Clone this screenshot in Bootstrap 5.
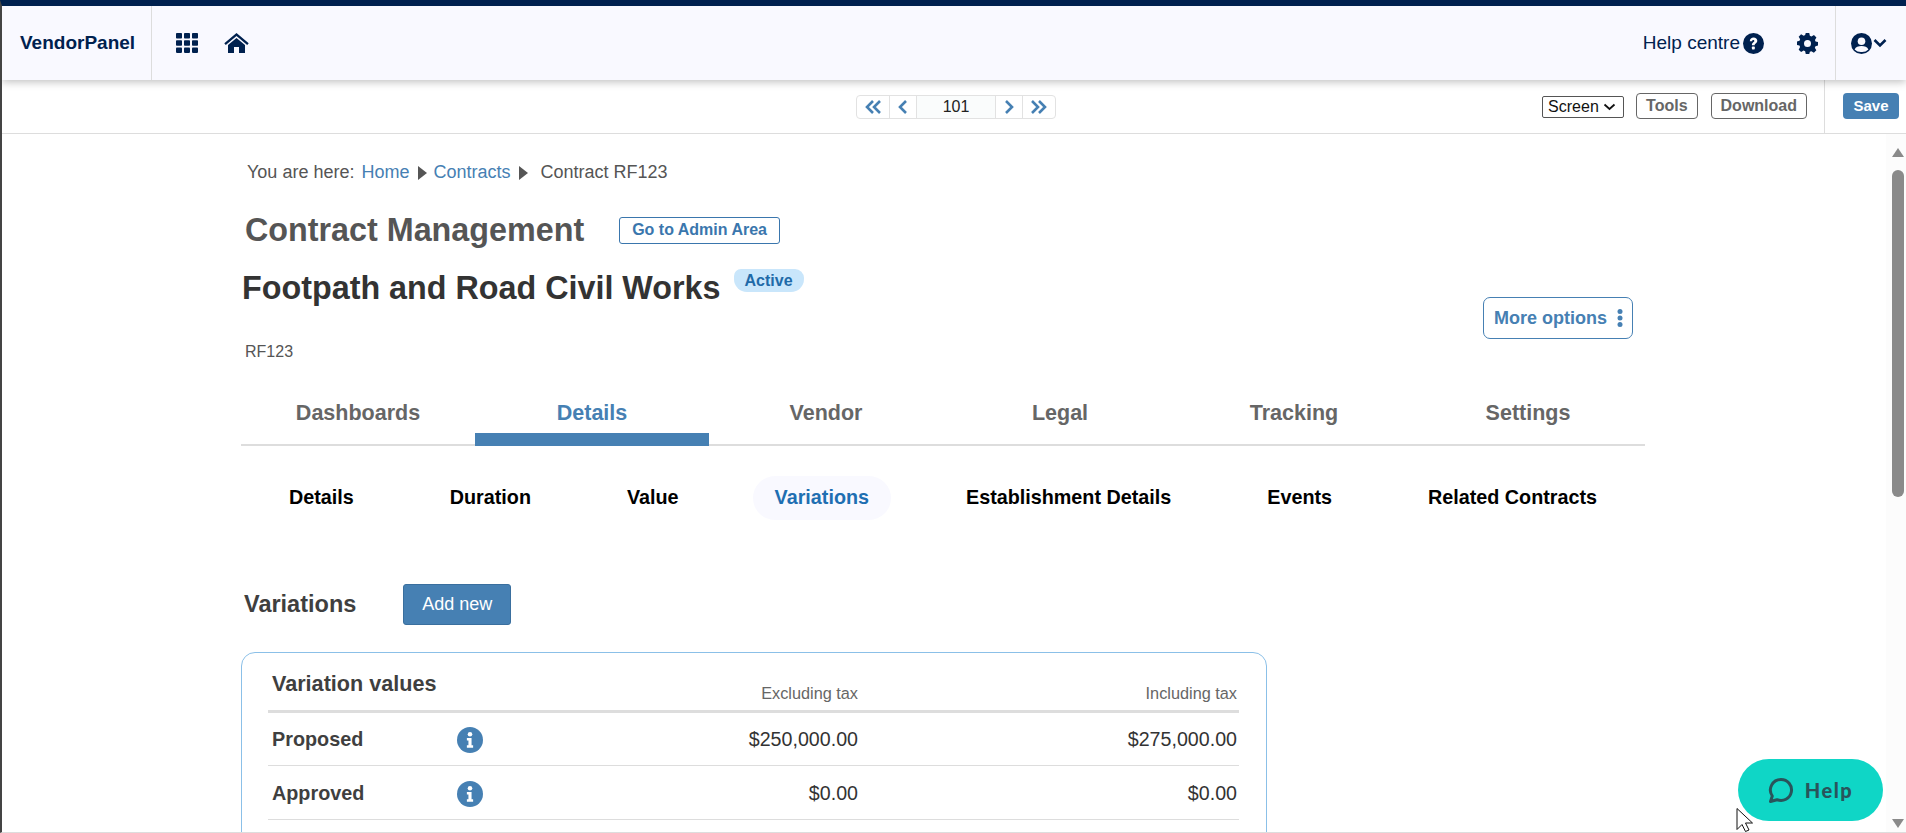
<!DOCTYPE html>
<html lang="en"><head><meta charset="utf-8"><title>VendorPanel</title>
<link href="https://cdn.jsdelivr.net/npm/bootstrap@5.3.0/dist/css/bootstrap.min.css" rel="stylesheet">
<style>
html,body{height:100%;overflow:hidden}
body{font-family:"Liberation Sans",Arial,sans-serif;color:#333;background:#fff;border-left:2px solid #444;border-bottom:1px solid #ddd;border-top:6px solid #00214f;display:flex;flex-direction:column}
a{text-decoration:none}
.topbar{height:74px;background:#f9f9ff;box-shadow:0 2px 8px rgba(0,0,0,.25);color:#00214f;position:relative;z-index:2;flex:none}
.brandcell{width:150px;height:100%;border-right:1px solid #ddd;font-size:19px;font-weight:700;padding-left:18px;color:#00214f}
.topicons{gap:26px;padding-left:24px}
.helptext{font-size:19px;margin-right:3px}
.gearicon{margin-left:33px}
.usercell{width:71px;height:100%;border-left:1px solid #ddd;padding-left:15px;margin-left:17px;gap:1px}
.toolrow{height:54px;border-bottom:1px solid #ddd;flex:none;position:relative}
.pager{position:absolute;left:854px;top:15px;display:flex;height:24px;border:1px solid #e2e2e2;border-radius:4px;font-size:16px;color:#222}
.pager span{display:flex;align-items:center;justify-content:center;border-right:1px solid #e2e2e2;width:33px}
.pager span.pnum{width:79px;background:#fafcfc}
.pager span:last-child{border-right:0;width:32px}
.pager span.pprev{width:27px}.pager span.pnext{width:27px}
.toolend{height:100%;gap:13px}
.selbox{width:82px;height:22px;border:1px solid #555;border-radius:2px;font-size:16px;color:#111;padding-left:5px;margin-right:-1px}
.toolbtn{height:26px;border:1px solid #666;border-radius:4px;color:#666;font-size:16px;font-weight:700;padding:0 9px;display:flex;align-items:center;margin-top:-1px}
.savecell{width:82px;height:100%;border-left:1px solid #ddd;margin-left:4px;padding-left:18px}
.savebtn{height:26px;width:56px;background:#4680b3;color:#fff;border-radius:4px;font-size:15px;font-weight:700;display:flex;align-items:center;justify-content:center;margin-top:-1px}
.workarea{flex:1;min-height:0;overflow:hidden;display:flex}
.pagecol{flex:1;min-width:0;padding:24px 0 0 239px;overflow:hidden}
.scrolltrack{width:20px;background:#fcfcfc;flex:none;display:flex;flex-direction:column;align-items:center;padding:14px 0 0 4px}
.thumb{width:12px;height:327px;background:#8a8a8a;border-radius:6px;margin-top:13px}
.arrowup{width:0;height:0;border:6.5px solid transparent;border-top:0;border-bottom:9px solid #8a8a8a}
.arrowdown{width:0;height:0;border:6.5px solid transparent;border-bottom:0;border-top:9px solid #8a8a8a;margin-top:auto;margin-bottom:4px}
.crumbs{font-size:18px;color:#555;padding-left:6px;height:28px;gap:6px}
.crumbs a{color:#4680b3}
.crumbs .homelink{margin-left:1px}
.crumbarrow{width:0;height:0;border:7px solid transparent;border-left:9px solid #555;border-right:0;margin:2px 0 0 3px}
.crumbs .endcrumb{margin-left:6px}
.modhead{padding-left:4px;margin-top:27px;height:34px}
.modhead h2{font-size:32.3px;font-weight:700;color:#555;margin:0;line-height:34px}
.adminbtn{margin-left:35px;height:27px;border:1px solid #3a76ad;border-radius:3px;color:#3a76ad;font-size:16px;font-weight:700;padding:0 12px;display:flex;align-items:center}
.titlerow{position:relative;height:109px;width:1392px;margin-top:21px;padding-left:1px}
.titlerow h1{font-size:32.3px;font-weight:700;color:#333;margin:0;line-height:40px}
.activepill{background:#c9e6fb;color:#1f6aa8;font-size:16px;font-weight:700;border-radius:7px 9px 13px 13px;height:23px;padding:0 11px;display:flex;align-items:center;margin-left:13px;margin-top:1px}
.refcode{font-size:16px;color:#555;padding-left:3px;margin-top:32px}
.moreopts{position:absolute;right:0;top:29px;width:150px;height:42px;border:1px solid #4680b3;border-radius:7px;color:#4680b3;font-size:18px;font-weight:700;padding:0 10px;gap:10px;white-space:nowrap}
.moreopts svg{flex:none}
.moretabs{width:1404px;height:69px;border-bottom:2px solid #ddd}
.maintab{flex:1 1 0;text-align:center;font-size:21.5px;font-weight:700;color:#666;padding-top:23px;height:69px;line-height:26px}
.maintab.on{color:#4680b3;border-bottom:13px solid #4680b3;height:69px}
.subtabs{width:1404px;height:44px;margin-top:30px;padding-left:24px}
.subtab{font-size:19.75px;font-weight:700;color:#000;height:44px;border-radius:22px;padding:0 24px;display:flex;align-items:center;margin-right:48px;white-space:nowrap}
.subtab.on{background:#f9f9ff;color:#1f6fb2;padding:0 22px;margin:0 51px 0 2px}
.varhead{margin-top:64px;height:41px;padding-left:3px}
.varhead h3{font-size:23.5px;font-weight:700;color:#3f3f3f;margin:0}
.addbtn{margin-left:47px;width:108px;height:41px;background:#4680b3;border:1px solid #3a6f9e;border-radius:3px;color:#fff;font-size:18px;display:flex;align-items:center;justify-content:center}
.valuecard{width:1026px;margin-top:27px;border:1px solid #8bc0e8;border-radius:14px;padding:0 27px 0 26px;height:300px}
.hdrrow{height:60px;border-bottom:3px solid #ddd}
.rowline{height:54px;border-bottom:1px solid #ddd;font-size:19.65px;color:#333;padding-top:2px}
.rowline.firstrow{height:53px}
.hdrlabel{width:400px;padding-left:4px;font-size:21.6px;font-weight:700;color:#3f3f3f;margin-top:6px;white-space:nowrap}
.colname{width:189px;padding-left:4px;font-size:19.8px;font-weight:700;color:#3f3f3f}
.infocol{width:40px;display:flex}
.amt1{width:361px;text-align:right}
.amt2{flex:1;text-align:right;padding-right:2px}
.taxhdr{font-size:16.3px;color:#666;text-align:right;padding-top:23px}
.taxhdr.t1{width:190px}.taxhdr.t2{flex:1;padding-right:2px}
.helpbubble{position:fixed;left:1738px;top:759px;width:145px;height:62px;border-radius:31px;background:#0fd6c6;color:#29545b;font-family:"Lato","Liberation Sans",sans-serif;font-size:20px;font-weight:900;letter-spacing:1.5px;gap:11px;z-index:5}
.pointer{position:fixed;left:1736px;top:808px;z-index:6}
</style></head>
<body>
<nav class="topbar d-flex align-items-center">
  <div class="brandcell d-flex align-items-center">VendorPanel</div>
  <div class="topicons d-flex align-items-center">
    <svg width="22" height="20" viewBox="0 0 22 20" fill="#00214f"><rect x="0" y="0" width="6" height="5.5" rx=".8"/><rect x="8" y="0" width="6" height="5.5" rx=".8"/><rect x="16" y="0" width="6" height="5.5" rx=".8"/><rect x="0" y="7.2" width="6" height="5.5" rx=".8"/><rect x="8" y="7.2" width="6" height="5.5" rx=".8"/><rect x="16" y="7.2" width="6" height="5.5" rx=".8"/><rect x="0" y="14.4" width="6" height="5.5" rx=".8"/><rect x="8" y="14.4" width="6" height="5.5" rx=".8"/><rect x="16" y="14.4" width="6" height="5.5" rx=".8"/></svg>
    <svg width="25" height="20" viewBox="0 0 25 20" fill="#00214f"><path d="M12.5 0 0.3 10.2l1.5 1.8L12.5 3.1 23.2 12l1.5-1.8z"/><path d="M12.5 5 4 12v8h6v-6h5v6h6v-8z"/></svg>
  </div>
  <div class="ms-auto d-flex align-items-center h-100">
    <span class="helptext">Help centre</span>
    <svg width="21" height="21" viewBox="0 0 21 21"><circle cx="10.5" cy="10.5" r="10.5" fill="#00214f"/><path d="M6.800 8.200c.1-2.400 1.700-3.700 3.800-3.700 2.100 0 3.700 1.300 3.700 3.200 0 2.600-2.600 2.600-2.600 4.500H8.900c0-3.100 2.400-3 2.400-4.300 0-.6-.4-1-1-1-.7 0-1.100.5-1.200 1.400z" fill="#fff"/><rect x="8.900" y="13.600" width="2.900" height="2.900" rx=".7" fill="#fff"/></svg>
    <svg class="gearicon" width="21" height="21" viewBox="0 0 24 24" fill="#00214f" fill-rule="evenodd"><path d="M10 0h4l.7 3.200 1.800.8 2.900-1.700 2.800 2.800L20.500 8l.7 1.800 2.800.6v4l-2.900.7-.7 1.700 1.700 3-2.800 2.700-2.900-1.700-1.700.7L14 24h-4l-.7-3.200-1.700-.7-2.900 1.700-2.800-2.800L3.500 16l-.7-1.800L0 13.600v-4l2.900-.7.7-1.700-1.700-3L4.700 1.400l2.900 1.700 1.700-.7zM12 8a4 4 0 1 0 0 8 4 4 0 0 0 0-8z"/></svg>
    <div class="usercell d-flex align-items-center">
      <svg width="21" height="21" viewBox="0 0 21 21"><circle cx="10.5" cy="10.5" r="10.5" fill="#00214f"/><circle cx="10.5" cy="8.2" r="3.8" fill="#f9f9ff"/><path d="M3.6 16.4c1.2-2.4 3.6-3.4 6.9-3.4s5.700 1 6.900 3.400A9 9 0 0 1 10.500 19a9 9 0 0 1-6.900-2.600z" fill="#f9f9ff"/></svg>
      <svg width="14" height="10" viewBox="0 0 14 10"><path d="M1.500 2 7 7.500 12.500 2" fill="none" stroke="#00214f" stroke-width="2.600"/></svg>
    </div>
  </div>
</nav>
<div class="toolrow d-flex align-items-center justify-content-end">
  <div class="pager">
    <span><svg width="18" height="14" viewBox="0 0 18 14" fill="none" stroke="#4680b3" stroke-width="2.600"><path d="M9 1 3 7l6 6M16 1l-6 6 6 6"/></svg></span>
    <span class="pprev"><svg width="10" height="14" viewBox="0 0 10 14" fill="none" stroke="#4680b3" stroke-width="2.600"><path d="M8 1 2 7l6 6"/></svg></span>
    <span class="pnum">101</span>
    <span class="pnext"><svg width="10" height="14" viewBox="0 0 10 14" fill="none" stroke="#4680b3" stroke-width="2.600"><path d="m2 1 6 6-6 6"/></svg></span>
    <span><svg width="18" height="14" viewBox="0 0 18 14" fill="none" stroke="#4680b3" stroke-width="2.600"><path d="m2 1 6 6-6 6M9 1l6 6-6 6"/></svg></span>
  </div>
  <div class="toolend d-flex align-items-center">
    <div class="selbox d-flex align-items-center">Screen<svg class="ms-1" width="13" height="8" viewBox="0 0 13 8"><path d="M1.500 1.500 6.500 6l5-4.500" fill="none" stroke="#111" stroke-width="1.800"/></svg></div>
    <a class="toolbtn" href="#">Tools</a>
    <a class="toolbtn" href="#">Download</a>
    <div class="savecell d-flex align-items-center"><a class="savebtn" href="#">Save</a></div>
  </div>
</div>
<div class="workarea">
  <main class="pagecol">
    <div class="crumbs d-flex align-items-center"><span>You are here:</span><a class="homelink" href="#">Home</a><i class="crumbarrow"></i><a href="#">Contracts</a><i class="crumbarrow"></i><span class="endcrumb">Contract RF123</span></div>
    <div class="modhead d-flex align-items-center"><h2>Contract Management</h2><a class="adminbtn" href="#">Go to Admin Area</a></div>
    <div class="titlerow">
      <div class="d-flex align-items-start"><h1>Footpath and Road Civil Works</h1><span class="activepill">Active</span></div>
      <div class="refcode">RF123</div>
      <a class="moreopts d-flex align-items-center" href="#">More options<svg width="6" height="18" viewBox="0 0 6 18" fill="#4680b3"><circle cx="3" cy="2.500" r="2.500"/><circle cx="3" cy="9" r="2.500"/><circle cx="3" cy="15.500" r="2.500"/></svg></a>
    </div>
    <div class="moretabs d-flex">
      <div class="maintab">Dashboards</div><div class="maintab on">Details</div><div class="maintab">Vendor</div><div class="maintab">Legal</div><div class="maintab">Tracking</div><div class="maintab">Settings</div>
    </div>
    <div class="subtabs d-flex align-items-center">
      <a class="subtab" href="#">Details</a><a class="subtab" href="#">Duration</a><a class="subtab" href="#">Value</a><a class="subtab on" href="#">Variations</a><a class="subtab" href="#">Establishment Details</a><a class="subtab" href="#">Events</a><a class="subtab" href="#">Related Contracts</a>
    </div>
    <div class="varhead d-flex align-items-center"><h3>Variations</h3><a class="addbtn" href="#">Add new</a></div>
    <section class="valuecard">
      <div class="hdrrow d-flex align-items-center"><div class="hdrlabel">Variation values</div><div class="taxhdr t1">Excluding tax</div><div class="taxhdr t2">Including tax</div></div>
      <div class="rowline firstrow d-flex align-items-center"><div class="colname">Proposed</div><div class="infocol"><svg width="26" height="26" viewBox="0 0 25 25"><circle cx="12.500" cy="12.500" r="12.500" fill="#4680b3"/><circle cx="12.500" cy="7" r="2.200" fill="#fff"/><path d="M9.500 10.500h4.500v7h1.500v2.500h-6v-2.500h1.500v-4.500h-1.500z" fill="#fff"/></svg></div><div class="amt1">$250,000.00</div><div class="amt2">$275,000.00</div></div>
      <div class="rowline d-flex align-items-center"><div class="colname">Approved</div><div class="infocol"><svg width="26" height="26" viewBox="0 0 25 25"><circle cx="12.500" cy="12.500" r="12.500" fill="#4680b3"/><circle cx="12.500" cy="7" r="2.200" fill="#fff"/><path d="M9.500 10.500h4.500v7h1.500v2.500h-6v-2.500h1.500v-4.500h-1.500z" fill="#fff"/></svg></div><div class="amt1">$0.00</div><div class="amt2">$0.00</div></div>
    </section>
  </main>
  <aside class="scrolltrack"><i class="arrowup"></i><div class="thumb"></div><i class="arrowdown"></i></aside>
</div>
<a class="helpbubble d-flex align-items-center justify-content-center" href="#"><svg width="26" height="27" viewBox="0 0 26 27" fill="none" stroke="#29545b" stroke-width="3" stroke-linejoin="round" stroke-linecap="round"><path d="M13 2.500a10.500 10.500 0 1 1-4 20.200L2.500 24.500l1.800-5.500A10.500 10.500 0 0 1 13 2.500z"/></svg>Help</a>
<svg class="pointer" width="20" height="24" viewBox="0 0 20 24"><path d="M1 .5v21l5-5 3.500 7 3.500-1.500-3.500-7h7z" fill="#fff" stroke="#111" stroke-width="1"/></svg>
</body></html>
